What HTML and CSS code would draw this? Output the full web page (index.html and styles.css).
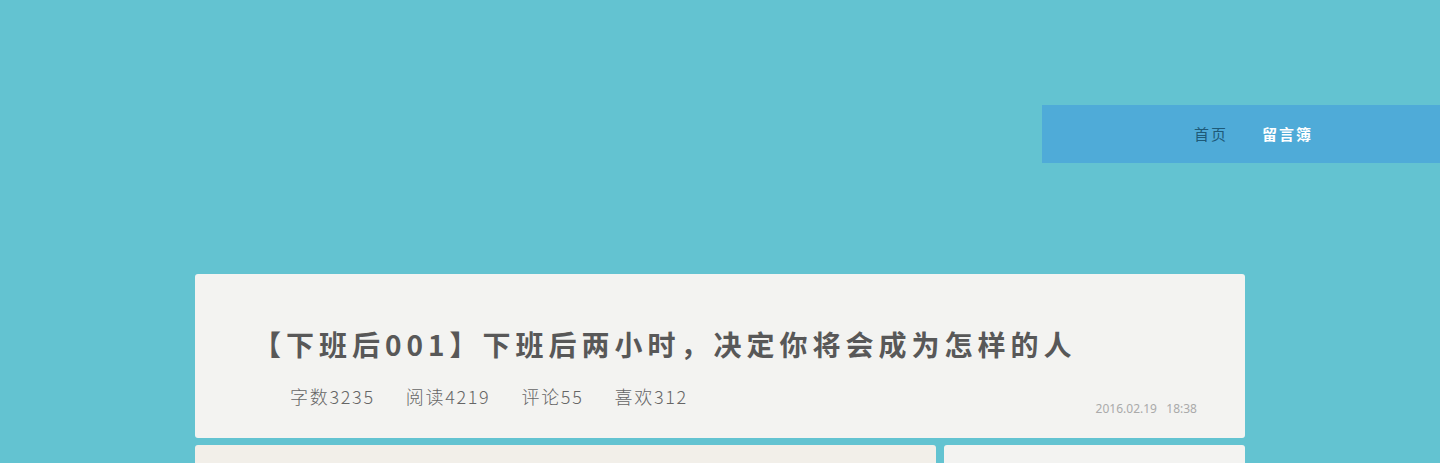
FILE: index.html
```html
<!DOCTYPE html>
<html lang="zh-CN">
<head>
<meta charset="utf-8">
<title>下班后两小时</title>
<link rel="stylesheet" href="styles.css">
</head>
<body>
<header class="header">
  <nav class="nav">
    <a class="nav-link nav-home" href="#">首页</a>
    <a class="nav-link nav-active" href="#">留言簿</a>
  </nav>
</header>
<main class="page">
  <article class="post-card">
    <h1 class="post-title">【下班后001】下班后两小时，决定你将会成为怎样的人</h1>
    <div class="post-meta">
      <span class="meta-item">字数3235</span>
      <span class="meta-item">阅读4219</span>
      <span class="meta-item">评论55</span>
      <span class="meta-item">喜欢312</span>
      <span class="post-date">2016.02.19&nbsp;&nbsp;&nbsp;18:38</span>
    </div>
  </article>
  <div class="lower">
    <section class="content-panel"></section>
    <aside class="side-panel"></aside>
  </div>
</main>
</body>
</html>
```
FILE: styles.css
```css
html, body {
  margin: 0;
  padding: 0;
}
body {
  background: #63c3d1;
  font-family: "Noto Sans CJK SC", "Noto Sans", sans-serif;
  height: 463px;
  overflow: hidden;
}
.header {
  display: flex;
  justify-content: flex-end;
  padding-top: 105px;
}
.nav {
  width: 398px;
  height: 58px;
  background: #4fabd8;
  display: flex;
  align-items: center;
  padding-left: 152px;
  box-sizing: border-box;
  gap: 34px;
}
.nav-link {
  text-decoration: none;
  font-size: 15px;
  letter-spacing: 2px;
  line-height: 20px;
}
.nav-home {
  color: #1e5a78;
}
.nav-active {
  color: #ffffff;
  font-weight: bold;
}
.page {
  width: 1050px;
  margin: 111px auto 0;
}
.post-card {
  background: #f3f3f1;
  border-radius: 3px;
  height: 164px;
  box-sizing: border-box;
  padding: 50px 48px 0 58px;
}
.post-title {
  margin: 0;
  font-size: 28px;
  line-height: 40px;
  font-weight: bold;
  letter-spacing: 5px;
  color: #585858;
}
.post-meta {
  display: flex;
  align-items: flex-end;
  padding-left: 37px;
  margin-top: 17px;
  gap: 31px;
}
.meta-item {
  font-size: 18px;
  line-height: 30px;
  color: #666;
  font-weight: 300;
  letter-spacing: 1.7px;
}
.post-date {
  margin-left: auto;
  font-family: "Noto Sans", "Noto Sans CJK SC", sans-serif;
  font-size: 12px;
  color: #aaa;
  line-height: 16px;
  margin-bottom: -6px;
}
.lower {
  display: flex;
  gap: 8px;
  margin-top: 7px;
}
.content-panel {
  width: 741px;
  height: 40px;
  background: #f2efe9;
  border-radius: 3px;
}
.side-panel {
  flex: 1;
  height: 40px;
  background: #f3f3f1;
  border-radius: 3px;
}
```
